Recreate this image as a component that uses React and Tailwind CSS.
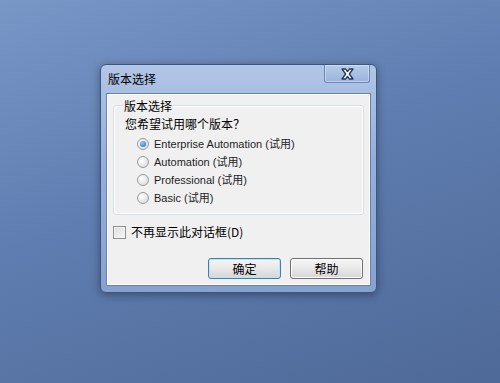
import { useState } from "react";

const cjk = "font-['Microsoft_YaHei','Noto_Sans_CJK_SC',sans-serif]";
const latin = "font-['Liberation_Sans','Noto_Sans_CJK_SC',sans-serif]";

function Radio({ checked }) {
  return (
    <span className="flex h-[12px] w-[12px] items-center justify-center rounded-full border border-[#9a9a9a] bg-[radial-gradient(circle_at_35%_35%,#ffffff,#d4d4d4)]">
      {checked && (
        <span className="h-[6px] w-[6px] rounded-full bg-[radial-gradient(circle_at_40%_35%,#8fd0ff,#1d5f9e)]" />
      )}
    </span>
  );
}

function Button({ children, primary }) {
  return (
    <button
      className={
        "flex h-[21px] w-[73px] items-center justify-center rounded-[3px] border bg-[linear-gradient(#f6f6f6,#e8e8e8_50%,#d6d6d6)] text-[12px] text-black " +
        cjk +
        (primary
          ? " border-[#3c7fb1] shadow-[inset_0_0_0_1px_#bfe4f8]"
          : " border-[#707070] shadow-[inset_0_0_0_1px_#fbfbfb]")
      }
    >
      {children}
    </button>
  );
}

function App() {
  const [edition, setEdition] = useState(0);
  const editions = ["Enterprise Automation", "Automation", "Professional", "Basic"];

  return (
    <div className="flex h-[383px] w-[500px] items-start bg-[linear-gradient(160deg,#7896c6,#5f7db0_45%,#4e6997)] pl-[100px] pt-[64px]">
      <div className="flex h-[229px] w-[277px] flex-col rounded-[6px] border border-[#3d5680] bg-[linear-gradient(#b2c6e6,#94b0dc_40%,#86a2cf)] shadow-[0_2px_8px_rgba(0,0,0,0.35)]">
        <div className="flex h-[28px] items-start justify-between">
          <span className={"pl-[7px] pt-[5px] text-[12px] text-black " + cjk}>版本选择</span>
          <div className="mr-[6px] flex h-[18px] w-[46px] items-center justify-center rounded-b-[3px] border border-t-0 border-[#6f87b0] bg-[linear-gradient(#b8cbe8,#9bb4dc)] shadow-[inset_0_0_0_1px_rgba(255,255,255,0.35)]">
            <svg width="13" height="12" viewBox="0 0 13 12">
              <path
                d="M1 1h3.5l2 2.6 2-2.6H12L8.3 6 12 11H8.5l-2-2.6-2 2.6H1l3.7-5z"
                fill="#ffffff"
                stroke="#24385a"
                strokeWidth="1.3"
                strokeLinejoin="round"
              />
            </svg>
          </div>
        </div>
        <div className="mx-[5px] mb-[6px] flex flex-1 flex-col border border-[#6a82aa] bg-[#f0f0f0] shadow-[inset_0_0_0_1px_#ffffff]">
          <div className="relative mx-[6px] mt-[11px] flex h-[110px] flex-col rounded-[3px] border border-[#d5dfe5] pl-[11px] shadow-[inset_0_0_0_1px_#ffffff]">
            <span className={"absolute left-[9px] top-[-9px] bg-[#f0f0f0] px-[1px] text-[12px] leading-[17px] text-black " + cjk}>
              版本选择
            </span>
            <span className={"mt-[9px] text-[12px] leading-[18px] text-black " + cjk}>您希望试用哪个版本？</span>
            <div className="mt-[2px] flex flex-col pl-[12px]">
              {editions.map((name, i) => (
                <label
                  key={name}
                  className="flex h-[18px] cursor-default items-center gap-[5px]"
                  onClick={() => setEdition(i)}
                >
                  <Radio checked={edition === i} />
                  <span className={"text-[11px] text-[#1e1e1e] " + latin}>
                    {name} (试用)
                  </span>
                </label>
              ))}
            </div>
          </div>
          <label className="ml-[6px] mt-[8px] flex items-center gap-[5px]">
            <span className="h-[13px] w-[13px] border border-[#8f8f8f] bg-[linear-gradient(135deg,#dcdcdc,#f8f8f8)] shadow-[inset_0_0_0_1px_#f4f4f4]" />
            <span className={"text-[12px] text-black " + cjk}>不再显示此对话框(D)</span>
          </label>
          <div className="mr-[7px] mt-[17px] flex justify-end gap-[9px]">
            <Button primary>确定</Button>
            <Button>帮助</Button>
          </div>
        </div>
      </div>
    </div>
  );
}

export default App;
